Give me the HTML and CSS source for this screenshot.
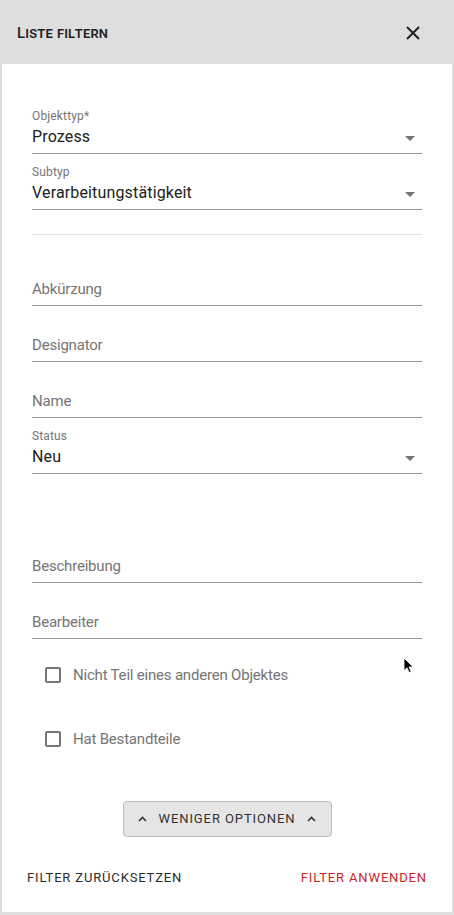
FILE: index.html
```html
<!DOCTYPE html>
<html lang="de">
<head>
<meta charset="utf-8">
<title>Liste filtern</title>
<link rel="stylesheet" href="styles.css">
</head>
<body>
<div class="dialog">
  <header class="header">
    <h1 class="title">Liste filtern</h1>
    <button class="close" aria-label="Schließen">
      <svg width="14" height="14" viewBox="0 0 14 14"><path d="M1 1 L13 13 M13 1 L1 13" stroke="#222" stroke-width="2" fill="none"/></svg>
    </button>
  </header>
  <main class="panel">
    <div class="field first">
      <div class="label">Objekttyp*</div>
      <div class="value select">Prozess<span class="arrow"></span></div>
    </div>
    <div class="field">
      <div class="label">Subtyp</div>
      <div class="value select">Verarbeitungstätigkeit<span class="arrow"></span></div>
    </div>
    <div class="sep"></div>
    <div class="field after-sep">
      <div class="label"></div>
      <div class="value placeholder">Abkürzung</div>
    </div>
    <div class="field">
      <div class="label"></div>
      <div class="value placeholder">Designator</div>
    </div>
    <div class="field">
      <div class="label"></div>
      <div class="value placeholder">Name</div>
    </div>
    <div class="field">
      <div class="label">Status</div>
      <div class="value select">Neu<span class="arrow"></span></div>
    </div>
    <div class="field spaced">
      <div class="label"></div>
      <div class="value placeholder">Beschreibung</div>
    </div>
    <div class="field">
      <div class="label"></div>
      <div class="value placeholder">Bearbeiter</div>
    </div>
    <label class="check first-check"><span class="box"></span><span class="check-text">Nicht Teil eines anderen Objektes</span></label>
    <label class="check second-check"><span class="box"></span><span class="check-text">Hat Bestandteile</span></label>
    <div class="more-row">
      <button class="more">
        <svg class="chev" width="9" height="6" viewBox="0 0 9 6"><path d="M1 5 L4.5 1.5 L8 5" stroke="#333" stroke-width="1.6" fill="none"/></svg>
        <span>Weniger Optionen</span>
        <svg class="chev" width="9" height="6" viewBox="0 0 9 6"><path d="M1 5 L4.5 1.5 L8 5" stroke="#333" stroke-width="1.6" fill="none"/></svg>
      </button>
    </div>
    <div class="footer">
      <button class="text-btn reset">Filter zurücksetzen</button>
      <button class="text-btn apply">Filter anwenden</button>
    </div>
  </main>
  <svg class="cursor" width="12" height="17" viewBox="0 0 12 17"><path d="M1 1 L1 13.5 L4 10.8 L6.2 15.5 L8.2 14.6 L6 10 L10 10 Z" fill="#000" stroke="#fff" stroke-width="0.8" stroke-linejoin="round"/></svg>
</div>
</body>
</html>
```
FILE: styles.css
```css
* { box-sizing: border-box; }
html, body { margin: 0; padding: 0; }
body {
  background: #dedede;
  font-family: Roboto, "Liberation Sans", sans-serif;
  color: #212121;
}
.dialog {
  position: relative;
  width: 454px;
  height: 915px;
  display: flex;
  flex-direction: column;
}
.header {
  height: 64px;
  flex: 0 0 64px;
  display: flex;
  align-items: center;
  justify-content: space-between;
  padding: 0 34px 0 17px;
  background: #dedede;
}
.title {
  margin: 0;
  font-size: 15px;
  font-weight: 500;
  font-variant: small-caps;
  color: #222;
  letter-spacing: 0.2px;
  line-height: 20px;
  padding-top: 2px;
}
.close {
  border: 0;
  background: transparent;
  padding: 0;
  width: 14px;
  height: 14px;
  display: block;
  margin-top: 1px;
}
.close svg { display: block; }
.panel {
  flex: 1;
  background: #fff;
  margin: 0 2px 3px;
  padding: 44px 30px 0;
  display: flex;
  flex-direction: column;
}
.field {
  margin-top: 10px;
  border-bottom: 1px solid #949494;
  padding-bottom: 4px;
}
.field.first { margin-top: 0; }
.field.after-sep { margin-top: 25px; }
.field.spaced { margin-top: 63px; }
.label {
  height: 16px;
  margin-bottom: 1px;
  font-size: 12px;
  line-height: 16px;
  letter-spacing: 0.15px;
  color: #757575;
}
.value {
  height: 24px;
  font-size: 16px;
  line-height: 24px;
  letter-spacing: 0.15px;
  color: #212121;
  position: relative;
}
.value.placeholder {
  color: #757575;
  font-size: 15px;
  letter-spacing: -0.2px;
}
.arrow {
  position: absolute;
  right: 7px;
  top: 11px;
  width: 0;
  height: 0;
  border-left: 5px solid transparent;
  border-right: 5px solid transparent;
  border-top: 5px solid #757575;
}
.sep {
  margin-top: 24px;
  height: 1px;
  background: #e3e3e3;
}
.check {
  display: flex;
  align-items: center;
  height: 24px;
  padding-left: 13px;
}
.first-check { margin-top: 24px; }
.second-check { margin-top: 40px; }
.box {
  width: 16px;
  height: 16px;
  border: 2px solid #767676;
  border-radius: 2px;
  flex: 0 0 16px;
  margin-right: 12px;
}
.check-text {
  font-size: 15px;
  line-height: 24px;
  letter-spacing: -0.2px;
  color: #757575;
}
.more-row {
  display: flex;
  justify-content: center;
  margin-top: 50px;
}
.more {
  height: 36px;
  width: 209px;
  display: flex;
  align-items: center;
  justify-content: center;
  gap: 12px;
  background: #e5e5e5;
  border: 1px solid #bdbdbd;
  border-radius: 4px;
  font-family: Roboto, "Liberation Sans", sans-serif;
  font-size: 13px;
  font-weight: 400;
  letter-spacing: 0.9px;
  text-transform: uppercase;
  color: #333;
  padding: 0;
}
.more span { line-height: 16px; }
.chev { display: block; }
.footer {
  display: flex;
  justify-content: space-between;
  margin: 23px -5px 0;
}
.text-btn {
  border: 0;
  background: transparent;
  padding: 0;
  height: 36px;
  font-family: Roboto, "Liberation Sans", sans-serif;
  font-size: 13px;
  font-weight: 400;
  letter-spacing: 0.85px;
  text-transform: uppercase;
  line-height: 36px;
}
.reset { color: #2b2b2b; }
.apply { color: #cc1f1f; }
.cursor {
  position: absolute;
  left: 403px;
  top: 657px;
}
```
